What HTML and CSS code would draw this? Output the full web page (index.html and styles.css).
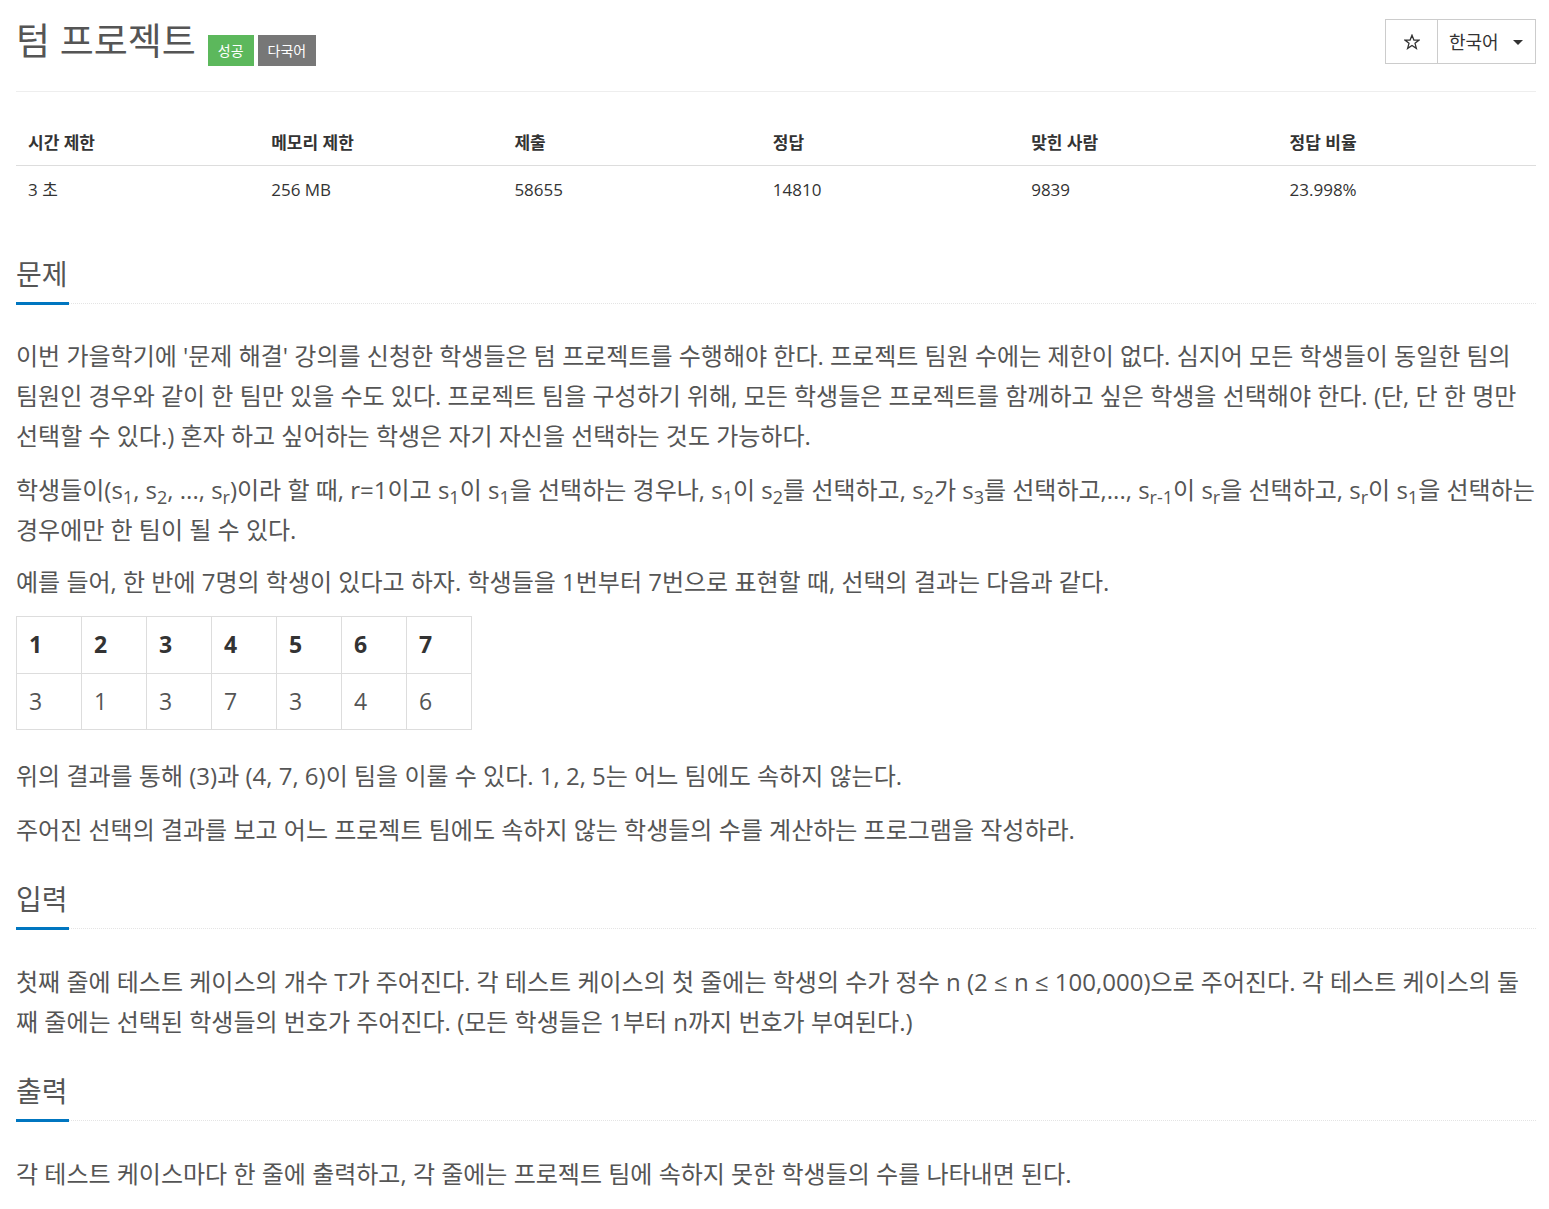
FILE: index.html
```html
<!DOCTYPE html>
<html lang="ko">
<head>
<meta charset="utf-8">
<title>텀 프로젝트</title>
<link rel="stylesheet" href="styles.css">
</head>
<body>
<div class="container">
  <div class="page-header">
    <div class="title-row">
      <h1 class="title">텀 프로젝트</h1>
      <span class="label label-success">성공</span>
      <span class="label label-default">다국어</span>
    </div>
    <div class="btn-group">
      <button class="btn btn-star" type="button">
        <svg width="16" height="16" viewBox="0 0 16 16" aria-hidden="true">
          <polygon points="8,1.2 9.9,6 15,6.1 11,9.3 12.4,14.4 8,11.5 3.6,14.4 5,9.3 1,6.1 6.1,6" fill="none" stroke="#333" stroke-width="1.3" stroke-linejoin="miter"/>
        </svg>
      </button>
      <button class="btn btn-lang" type="button">한국어 <span class="caret"></span></button>
    </div>
  </div>

  <table class="stats">
    <thead>
      <tr>
        <th class="c16">시간 제한</th>
        <th class="c16">메모리 제한</th>
        <th class="c17">제출</th>
        <th class="c17">정답</th>
        <th class="c17">맞힌 사람</th>
        <th class="c17">정답 비율</th>
      </tr>
    </thead>
    <tbody>
      <tr>
        <td>3 초</td>
        <td>256 MB</td>
        <td>58655</td>
        <td>14810</td>
        <td>9839</td>
        <td>23.998%</td>
      </tr>
    </tbody>
  </table>

  <section class="problem-section first">
    <div class="headline"><h2>문제</h2></div>
    <div class="problem-text">
      <p>이번 가을학기에 '문제 해결' 강의를 신청한 학생들은 텀 프로젝트를 수행해야 한다. 프로젝트 팀원 수에는 제한이 없다. 심지어 모든 학생들이 동일한 팀의 팀원인 경우와 같이 한 팀만 있을 수도 있다. 프로젝트 팀을 구성하기 위해, 모든 학생들은 프로젝트를 함께하고 싶은 학생을 선택해야 한다. (단, 단 한 명만 선택할 수 있다.) 혼자 하고 싶어하는 학생은 자기 자신을 선택하는 것도 가능하다.</p>
      <p class="with-sub">학생들이(s<sub>1</sub>, s<sub>2</sub>, ..., s<sub>r</sub>)이라 할 때, r=1이고 s<sub>1</sub>이 s<sub>1</sub>을 선택하는 경우나, s<sub>1</sub>이 s<sub>2</sub>를 선택하고, s<sub>2</sub>가 s<sub>3</sub>를 선택하고,..., s<sub>r-1</sub>이 s<sub>r</sub>을 선택하고, s<sub>r</sub>이 s<sub>1</sub>을 선택하는 경우에만 한 팀이 될 수 있다.</p>
      <p>예를 들어, 한 반에 7명의 학생이 있다고 하자. 학생들을 1번부터 7번으로 표현할 때, 선택의 결과는 다음과 같다.</p>
      <table class="grid">
        <thead>
          <tr><th>1</th><th>2</th><th>3</th><th>4</th><th>5</th><th>6</th><th>7</th></tr>
        </thead>
        <tbody>
          <tr><td>3</td><td>1</td><td>3</td><td>7</td><td>3</td><td>4</td><td>6</td></tr>
        </tbody>
      </table>
      <p>위의 결과를 통해 (3)과 (4, 7, 6)이 팀을 이룰 수 있다. 1, 2, 5는 어느 팀에도 속하지 않는다.</p>
      <p>주어진 선택의 결과를 보고 어느 프로젝트 팀에도 속하지 않는 학생들의 수를 계산하는 프로그램을 작성하라.</p>
    </div>
  </section>

  <section class="problem-section">
    <div class="headline"><h2>입력</h2></div>
    <div class="problem-text">
      <p>첫째 줄에 테스트 케이스의 개수 T가 주어진다. 각 테스트 케이스의 첫 줄에는 학생의 수가 정수 n (2 ≤ n ≤ 100,000)으로 주어진다. 각 테스트 케이스의 둘째 줄에는 선택된 학생들의 번호가 주어진다. (모든 학생들은 1부터 n까지 번호가 부여된다.)</p>
    </div>
  </section>

  <section class="problem-section">
    <div class="headline"><h2>출력</h2></div>
    <div class="problem-text">
      <p>각 테스트 케이스마다 한 줄에 출력하고, 각 줄에는 프로젝트 팀에 속하지 못한 학생들의 수를 나타내면 된다.</p>
    </div>
  </section>
</div>
</body>
</html>
```

FILE: styles.css
```css
* {
  box-sizing: border-box;
}

html, body {
  margin: 0;
  padding: 0;
  background: #fff;
}

body {
  font-family: "Open Sans", "Noto Sans CJK KR", sans-serif;
  color: #333;
}

.container {
  padding: 0 13px 0 16px;
}

/* header */
.page-header {
  display: flex;
  justify-content: space-between;
  align-items: flex-start;
  padding-top: 19px;
  height: 92px;
  border-bottom: 1px solid #eee;
}

.title-row {
  display: flex;
  align-items: flex-start;
}

.title {
  margin: 0;
  font-size: 37px;
  line-height: 44px;
  font-weight: 400;
  color: #555;
}

.label {
  display: inline-block;
  margin-top: 16px;
  height: 31px;
  line-height: 31px;
  padding: 0 10px;
  font-size: 14px;
  color: #fff;
}

.label-success {
  background: #5cb85c;
  margin-left: 12px;
}

.label-default {
  background: #777;
  margin-left: 4px;
}

.btn-group {
  display: flex;
}

.btn {
  font-family: "Open Sans", "Noto Sans CJK KR", sans-serif;
  background: #fff;
  border: 1px solid #ccc;
  height: 45px;
  margin: 0;
  color: #333;
  display: flex;
  align-items: center;
  justify-content: center;
  cursor: pointer;
}

.btn-star {
  width: 53px;
  padding: 0;
}

.btn-lang {
  width: 99px;
  margin-left: -1px;
  font-size: 18px;
  padding: 0 0 2px 11px;
  justify-content: flex-start;
}

.caret {
  display: inline-block;
  width: 0;
  height: 0;
  margin-left: 14px;
  margin-top: 3px;
  border-top: 5px solid #333;
  border-left: 5px solid transparent;
  border-right: 5px solid transparent;
}

/* stats table */
.stats {
  width: 100%;
  border-collapse: collapse;
  margin-top: 28px;
}

.stats th,
.stats td {
  text-align: left;
  padding: 12px 12px;
  line-height: 21px;
  font-size: 17px;
}

.stats th {
  font-weight: 700;
  color: #333;
  border-bottom: 1px solid #ddd;
}

.stats td {
  color: #333;
  padding-top: 13px;
}

.c16 { width: 16%; }
.c17 { width: 17%; }

/* sections */
.problem-section {
  margin-top: 31px;
}

.problem-section.first {
  margin-top: 44px;
}

.headline {
  border-bottom: 1px dotted #e4e4e4;
  margin-bottom: 33px;
}

.problem-section.first .headline {
  margin-bottom: 32px;
}

.headline h2 {
  display: inline-block;
  margin: 0 0 -2px 0;
  padding: 0 1px 10px 0;
  border-bottom: 3px solid #0076c0;
  font-size: 28px;
  line-height: 36px;
  font-weight: 400;
  color: #555;
}

.problem-text {
  font-size: 24px;
  line-height: 40px;
  color: #555;
}

.problem-text p {
  margin: 0 0 14px 0;
}

.problem-text p.with-sub {
  margin-bottom: 12px;
}

.problem-text sub {
  font-size: 75%;
  line-height: 0;
  position: relative;
  vertical-align: baseline;
  bottom: -0.25em;
}

/* problem grid table */
.grid {
  border-collapse: collapse;
  margin: 12px 0 26px 0;
  color: #333;
}

.grid th,
.grid td {
  border: 1px solid #ddd;
  width: 65px;
  padding: 12px 12px;
  line-height: 31.5px;
  text-align: left;
  font-size: 23px;
}

.grid th {
  font-weight: 700;
}

.grid td {
  color: #555;
}
```
